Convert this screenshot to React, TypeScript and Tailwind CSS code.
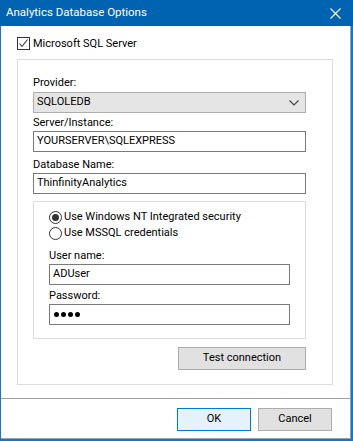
import React from "react";

const FONT = "font-['Segoe_UI',Roboto,'Liberation_Sans',sans-serif]";

function TextBox({ value, width }: { value: string; width: string }) {
  return (
    <div className={`${width} h-[21px] border border-[#7a7a7a] bg-white flex items-center pl-[3px] text-[11px] text-black`}>
      {value}
    </div>
  );
}

function Label({ text, className = "" }: { text: string; className?: string }) {
  return <div className={`h-[16px] pt-px leading-[16px] text-[11px] text-black ${className}`}>{text}</div>;
}

function Radio({ checked, label }: { checked: boolean; label: string }) {
  return (
    <div className="flex items-center h-[16px]">
      <div className="w-[13px] h-[13px] rounded-full border border-[#333] bg-white flex items-center justify-center">
        {checked && <div className="w-[7px] h-[7px] rounded-full bg-[#333]" />}
      </div>
      <span className="ml-[2px] text-[11px] leading-[16px] text-black">{label}</span>
    </div>
  );
}

function Button({ label, width, primary }: { label: string; width: string; primary?: boolean }) {
  return (
    <div
      className={`${width} h-[23px] flex items-center justify-center text-[11px] text-black border ${
        primary ? "border-[#0078d7] bg-[#e5f1fb]" : "border-[#adadad] bg-[#e1e1e1]"
      }`}
    >
      {label}
    </div>
  );
}

export default function App() {
  return (
    <div className={`w-[353px] h-[441px] flex flex-col bg-[#1a73c4] pl-px pr-[2px] pb-[2px] ${FONT}`}>
      {/* title bar */}
      <div className="h-[26px] -ml-px -mr-[2px] bg-[#0063b1] flex items-center justify-between pl-[6px] pr-[12px]">
        <span className="text-[11.5px] text-white">Analytics Database Options</span>
        <svg width="11" height="11" viewBox="0 0 11 11">
          <path d="M0.5 0.5L10.5 10.5M10.5 0.5L0.5 10.5" stroke="white" strokeWidth="1.1" />
        </svg>
      </div>

      <div className="flex-1 bg-white flex flex-col border-r border-b border-[#a0a0a0]">
        {/* checkbox */}
        <div className="flex items-center ml-[16px] mt-[11px] h-[13px]">
          <div className="w-[13px] h-[13px] border border-[#333] bg-white flex items-center justify-center">
            <svg width="11" height="11" viewBox="0 0 11 11">
              <path d="M1.5 5.5L4 8.5L9.5 1.5" fill="none" stroke="#333" strokeWidth="1.1" />
            </svg>
          </div>
          <span className="ml-[3px] text-[11px] leading-[16px] text-black">Microsoft SQL Server</span>
        </div>

        {/* outer group */}
        <div className="ml-[16px] mt-[9px] w-[316px] h-[326px] border border-[#dcdcdc] px-[15px] pt-[14px]">
          <Label text="Provider:" />
          <div className="mt-[2px] w-[273px] h-[21px] border border-[#adadad] bg-[#e5e5e5] flex items-center justify-between pl-[3px] pr-[6px] text-[11px] text-black">
            <span>SQLOLEDB</span>
            <svg width="10" height="6" viewBox="0 0 10 6">
              <path d="M0.5 0.5L5 5L9.5 0.5" fill="none" stroke="#444" strokeWidth="1.1" />
            </svg>
          </div>

          <Label text="Server/Instance:" className="mt-[1px]" />
          <div className="mt-[1px]">
            <TextBox value="YOURSERVER\SQLEXPRESS" width="w-[273px]" />
          </div>

          <Label text="Database Name:" className="mt-[4px]" />
          <div className="mt-[1px]">
            <TextBox value="ThinfinityAnalytics" width="w-[273px]" />
          </div>

          {/* inner group */}
          <div className="mt-[7px] w-[273px] h-[138px] border border-[#dcdcdc] px-[15px] pt-[7px]">
            <Radio checked label="Use Windows NT Integrated security" />
            <Radio checked={false} label="Use MSSQL credentials" />
            <Label text="User name:" className="mt-[6px]" />
            <div className="mt-[1px]">
              <TextBox value="ADUser" width="w-[241px]" />
            </div>
            <Label text="Password:" className="mt-[2px]" />
            <div className="mt-[1px]">
              <div className="w-[241px] h-[21px] border border-[#7a7a7a] bg-white flex items-center pl-[4px] gap-[2px]">
                {[0, 1, 2, 3].map((i) => (
                  <div key={i} className="w-[5px] h-[5px] rounded-full bg-black" />
                ))}
              </div>
            </div>
          </div>

          <div className="mt-[8px] flex justify-end w-[273px]">
            <Button label="Test connection" width="w-[128px]" />
          </div>
        </div>

        {/* footer */}
        <div className="mt-[13px] border-t border-[#a0a0a0] flex justify-end gap-[7px] pt-[9px] pr-[18px]">
          <Button label="OK" width="w-[74px]" primary />
          <Button label="Cancel" width="w-[74px]" />
        </div>
      </div>
    </div>
  );
}
